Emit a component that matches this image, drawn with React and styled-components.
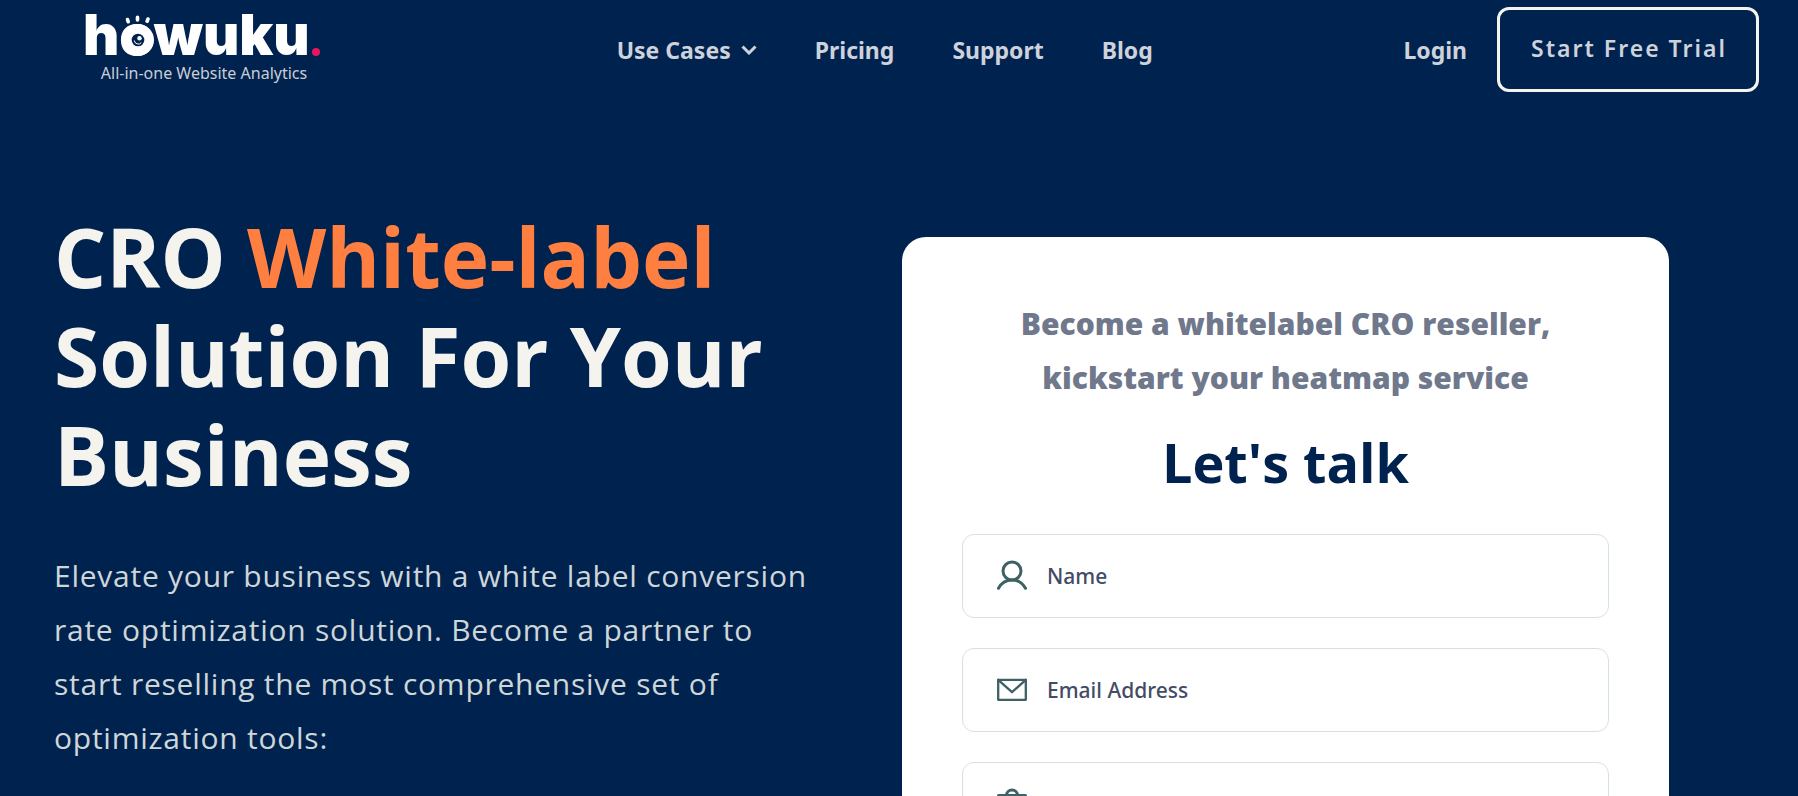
import { createGlobalStyle, styled } from "styled-components";

const GlobalStyle = createGlobalStyle`
  * {
    box-sizing: border-box;
  }

  body {
    margin: 0;
    background: #00224f;
    font-family: "Open Sans", sans-serif;
  }
`;

const Page = styled.div`
  height: 100vh;
  overflow: hidden;
`;

const Header = styled.header`
  display: flex;
  align-items: flex-start;
  justify-content: space-between;
  padding: 7px 39px 0 86px;
`;

const LogoLink = styled.a`
  display: flex;
  flex-direction: column;
  align-items: center;
  width: 236px;
  margin-right: 44px;
  color: #c9cdd6;
  font-family: "Noto Sans", sans-serif;
  font-size: 16px;
  line-height: 20px;
  text-decoration: none;
`;

const Wordmark = styled.svg`
  display: block;
  width: 236px;
  height: 56px;
  overflow: visible;
`;

const Nav = styled.nav`
  display: flex;
  gap: 58px;
  padding-top: 28px;
`;

const NavLink = styled.a`
  display: flex;
  align-items: center;
  gap: 10px;
  color: #ced2db;
  font-family: "Noto Sans", sans-serif;
  font-size: 23px;
  font-weight: 700;
  line-height: 30px;
  text-decoration: none;
`;

const Account = styled.div`
  display: flex;
  gap: 30px;
`;

const LoginBox = styled.div`
  padding-top: 28px;
`;

const TrialButton = styled.button`
  height: 85px;
  padding: 0 29px 3px 31px;
  border: 3px solid #f5f3ee;
  border-radius: 12px;
  background: transparent;
  color: #ced2db;
  font-family: "Noto Sans", sans-serif;
  font-size: 23px;
  font-weight: 600;
  letter-spacing: 2px;
`;

const Hero = styled.main`
  display: grid;
  grid-template-columns: 788fr 767fr;
  gap: 60px;
  align-items: start;
  padding: 115px 129px 0 54px;
`;

const Copy = styled.section`
  padding-right: 24px;
`;

const Title = styled.h1`
  margin: 0;
  color: #f5f3ee;
  font-size: 82px;
  font-weight: 700;
  line-height: 99px;
`;

const Accent = styled.span`
  color: #ff7f41;
`;

const Lead = styled.p`
  margin: 45px 0 0;
  color: #ced6d8;
  font-size: 30px;
  letter-spacing: 0.025em;
  line-height: 54px;
`;

const Card = styled.form`
  display: flex;
  flex-direction: column;
  margin-top: 30px;
  padding: 60px;
  border-radius: 24px;
  background: #fff;
`;

const CardIntro = styled.p`
  margin: 0;
  color: #70788c;
  font-size: 30px;
  font-weight: 800;
  line-height: 54px;
  text-align: center;
`;

const CardTitle = styled.h2`
  margin: 19px 0 34px;
  color: #00224f;
  font-size: 54px;
  font-weight: 700;
  line-height: 76px;
  text-align: center;
`;

const Field = styled.label`
  display: flex;
  align-items: center;
  gap: 20px;
  height: 84px;
  margin-bottom: 30px;
  padding: 0 32px 0 34px;
  border: 1px solid #d5e3e0;
  border-radius: 12px;
  color: #3e6163;
`;

const FieldInput = styled.input`
  flex: 1;
  min-width: 0;
  padding: 0;
  border: 0;
  outline: 0;
  background: transparent;
  color: #434b66;
  font-family: "Noto Sans", sans-serif;
  font-size: 21px;
  font-weight: 500;

  &::placeholder {
    color: #434b66;
    opacity: 1;
  }
`;

const Icon = ({ children }) => (
  <svg
    width="30"
    height="32"
    viewBox="0 0 30 32"
    fill="none"
    stroke="currentColor"
    strokeWidth="3"
    strokeLinecap="round"
    strokeLinejoin="round"
    aria-hidden="true"
  >
    {children}
  </svg>
);

const UserIcon = () => (
  <Icon>
    <circle cx="15" cy="11" r="9" />
    <path d="M1.500 28.300C4.300 23 9.200 20 15 20s10.700 3 13.500 8.300" />
  </Icon>
);

const MailIcon = () => (
  <Icon>
    <path d="M1.200 5.800h27.600v20H1.200z" strokeWidth="2.300" />
    <path d="M1.200 5.800 15 18.200 28.800 5.800" strokeWidth="2.300" />
  </Icon>
);

const CaseIcon = () => (
  <Icon>
    <path d="M1.500 7.500h27v21h-27z" />
    <path d="M9.500 7.500a5.500 5.500 0 0 1 11 0" />
  </Icon>
);

const Logo = () => (
  <LogoLink href="#">
    <Wordmark viewBox="0 0 236 56" role="img" aria-label="howuku.">
      <text x="-3" y="48" fill="#fff" fontFamily="Inter, sans-serif" fontSize="56" fontWeight="900">
        howuku
      </text>
      <circle cx="52" cy="33" r="16" fill="#fff" />
      <circle cx="52" cy="33" r="6.300" fill="#00224f" />
      <circle cx="53.500" cy="31.300" r="2.200" fill="#fff" />
      <path d="M48.300 33.500a4 4 0 0 0 7 2.200" fill="none" stroke="#fff" strokeWidth="1" />
      <g stroke="#fff" strokeWidth="3.600" strokeLinecap="round">
        <path d="m41.500 12.500.7 2.200M51.500 10.300v2.600M62 12l-.9 2.200" />
      </g>
      <circle cx="230" cy="45" r="4" fill="#e8175d" />
    </Wordmark>
    All-in-one Website Analytics
  </LogoLink>
);

const fields = [
  { name: "name", label: "Name", type: "text", icon: <UserIcon /> },
  { name: "email", label: "Email Address", type: "email", icon: <MailIcon /> },
  { name: "business", label: "Business", type: "text", icon: <CaseIcon /> },
];

export default function App() {
  return (
    <Page>
      <GlobalStyle />
      <Header>
        <Logo />
        <Nav>
          <NavLink href="#">
            Use Cases
            <svg width="16" height="10" viewBox="0 0 16 10" fill="none" stroke="currentColor" strokeWidth="3">
              <path d="m1.500 1.500 6.500 6.500 6.500-6.500" />
            </svg>
          </NavLink>
          <NavLink href="#">Pricing</NavLink>
          <NavLink href="#">Support</NavLink>
          <NavLink href="#">Blog</NavLink>
        </Nav>
        <Account>
          <LoginBox>
            <NavLink href="#">Login</NavLink>
          </LoginBox>
          <TrialButton type="button">Start Free Trial</TrialButton>
        </Account>
      </Header>
      <Hero>
        <Copy>
          <Title>
            CRO <Accent>White-label</Accent> Solution For Your Business
          </Title>
          <Lead>
            Elevate your business with a white label conversion rate optimization solution. Become a
            partner to start reselling the most comprehensive set of optimization tools:
          </Lead>
        </Copy>
        <Card>
          <CardIntro>
            Become a whitelabel CRO reseller,
            <br />
            kickstart your heatmap service
          </CardIntro>
          <CardTitle>Let's talk</CardTitle>
          {fields.map((field) => (
            <Field key={field.name}>
              {field.icon}
              <FieldInput
                name={field.name}
                type={field.type}
                placeholder={field.label}
                aria-label={field.label}
              />
            </Field>
          ))}
        </Card>
      </Hero>
    </Page>
  );
}
